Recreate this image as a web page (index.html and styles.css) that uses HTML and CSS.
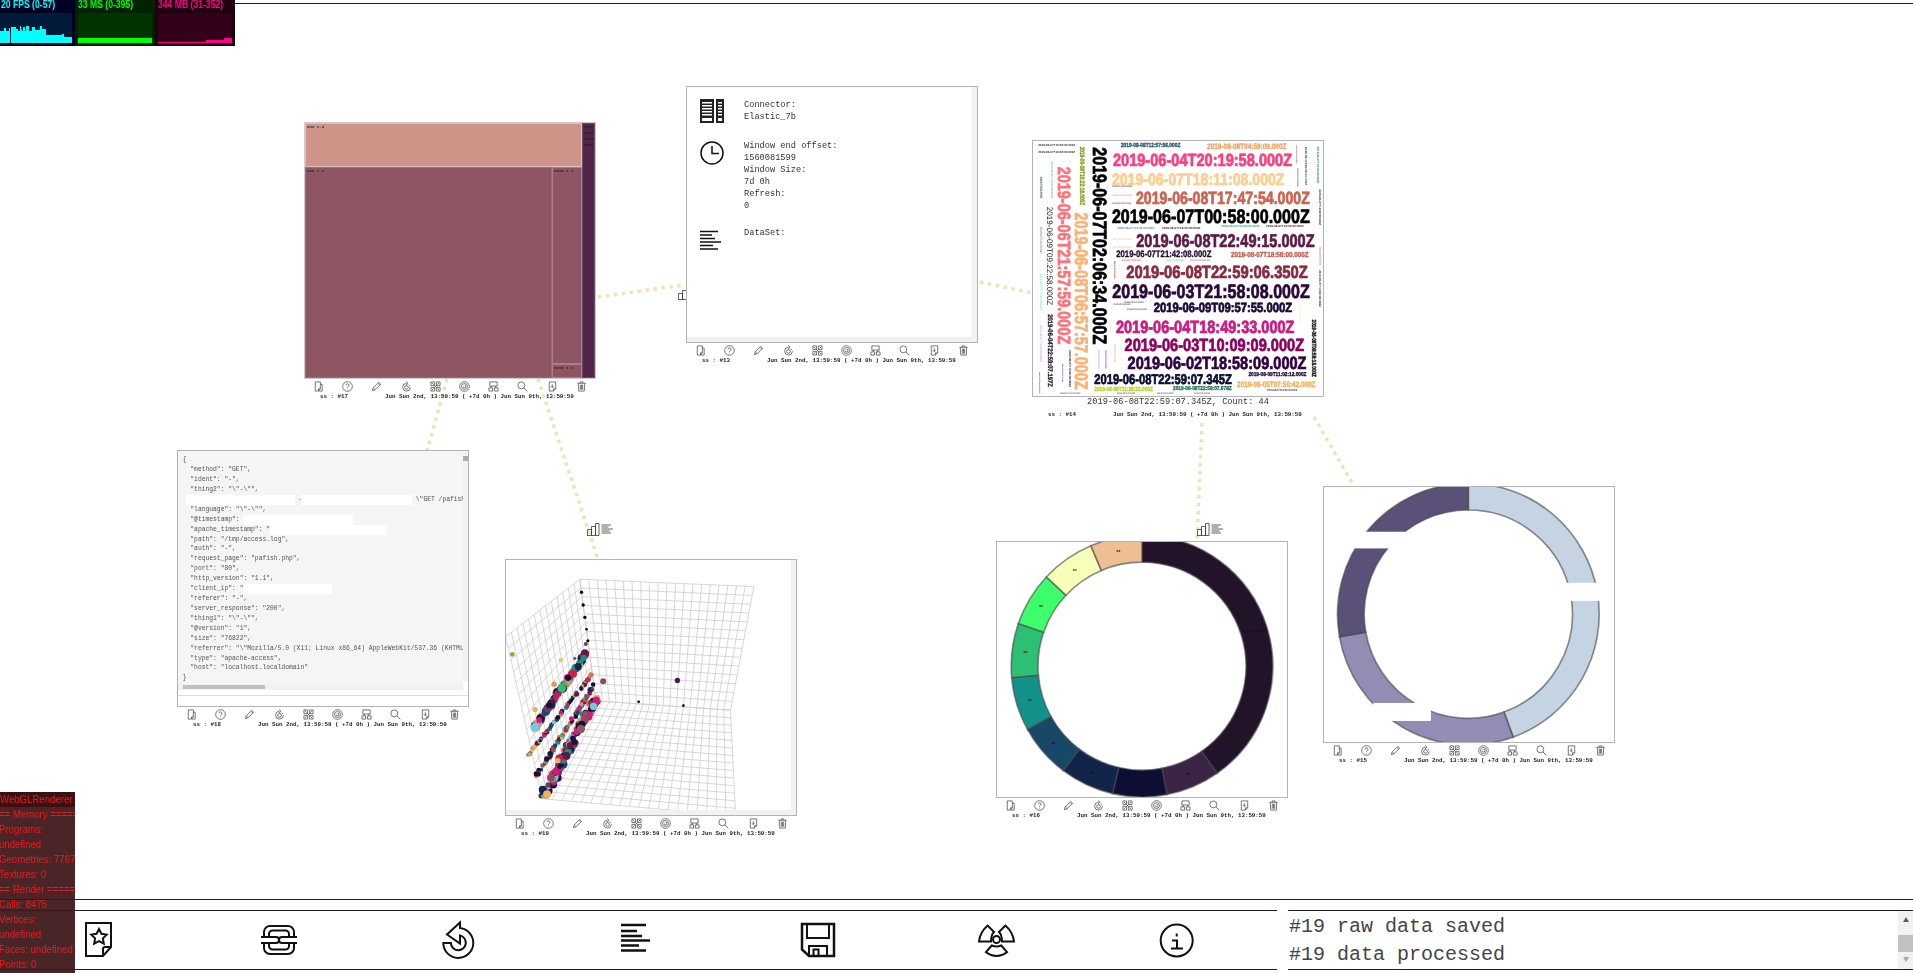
FILE: index.html
```html
<!DOCTYPE html>
<html lang="en">
<head>
<meta charset="utf-8">
<title>Dashboard</title>
<link rel="stylesheet" href="styles.css">
<script src="app.js" defer></script>
</head>
<body>
<svg class="defs" width="0" height="0" aria-hidden="true">
  <symbol id="t-copy" viewBox="0 0 24 24"><path d="M5 2h11v15l-4 5H5z M12 22v-5h4 M16 7h4v15h-7"/></symbol>
  <symbol id="t-help" viewBox="0 0 24 24"><circle cx="12" cy="12" r="10.5"/><path d="M8.8 9.5a3.2 3.2 0 1 1 4.8 2.7c-1 .6-1.6 1.2-1.6 2.5 M12 17v1.5"/></symbol>
  <symbol id="t-edit" viewBox="0 0 24 24"><path d="M3 21l1.5-5.500L17 3l4 4L8.500 19.500z M15 5l4 4 M5 15l4 4"/></symbol>
  <symbol id="t-spin" viewBox="0 0 24 24"><path d="M12 5a8.500 8.500 0 1 0 8.500 8.500 M11 1l4.500 4-4.500 3.500 M17 8l3 3"/><circle cx="12" cy="14" r="4"/></symbol>
  <symbol id="t-grid" viewBox="0 0 24 24"><path d="M2 2h8v8H2z M14 2h8v8h-8z M2 14h8v8H2z M14 14h8v8h-8z M10 10l4 4 M14 10l-4 4 M4 4l4 4 M20 4l-4 4 M4 20l4-4 M20 20l-4-4"/></symbol>
  <symbol id="t-disc" viewBox="0 0 24 24"><circle cx="12" cy="12" r="10.500"/><circle cx="12" cy="12" r="6.500"/><path d="M12 9a3 3 0 1 1-3 3"/></symbol>
  <symbol id="t-tree" viewBox="0 0 24 24"><path d="M4 2h16v9H4z M2 15h8v7H2z M14 15h8v7h-8z M7 11v4 M17 11v4"/></symbol>
  <symbol id="t-find" viewBox="0 0 24 24"><circle cx="9.500" cy="9.500" r="7.500"/><path d="M15 15l7.500 7.500"/></symbol>
  <symbol id="t-save" viewBox="0 0 24 24"><path d="M5 2h14v15l-5 5H5z M14 22v-5h5 M11.500 7v7 M8.500 11.500l3 3 3-3"/></symbol>
  <symbol id="t-drop" viewBox="0 0 24 24"><path d="M3 5h18 M9 5V2h6v3 M5 5l1 17h12l1-17 M9.500 8v11 M12 8v11 M14.500 8v11"/></symbol>
  <symbol id="t-stack" viewBox="0 0 26 13"><path class="thin" d="M.5 12.500V6.500h4v6 M4.500 12.500V3.500h4v9 M8.500 12.500V.5h3.500v12 M0 12.500h12"/><path class="thin" d="M14.500 2H24 M14.500 4h7 M14.500 6H26 M14.500 8h8 M14.500 10H24"/></symbol>
</svg>

<div class="page">
  <main class="canvas">
    <svg class="links" viewBox="0 4 1913 895" aria-hidden="true">
      <path d="M598 297L683 285"/>
      <path d="M980 282L1032 293"/>
      <path d="M447 379L427 451"/>
      <path d="M538 379L598 559"/>
      <path d="M1202 423L1197 541"/>
      <path d="M1314 417L1354 486"/>
    </svg>
    <svg class="stack s1"><use href="#t-stack"/></svg>
    <svg class="stack s2"><use href="#t-stack"/></svg>
    <svg class="stack s3"><use href="#t-stack"/></svg>

    <section class="win w17">
      <div class="body treemap">
        <div class="tm-left">
          <div class="tm-cell tm-peach">xxx 1.3</div>
          <div class="tm-row">
            <div class="tm-cell tm-mauve">xxx 1.1</div>
            <div class="tm-side">
              <div class="tm-cell tm-mauve">xxxx 1.1</div>
              <div class="tm-cell tm-mauve">xxxx 1.1</div>
            </div>
          </div>
        </div>
        <div class="tm-cell tm-plum">xxxxxx<br>xxxx<br>xxxxxx<br>xxxx</div>
      </div>
      <div class="tools"><svg><use href="#t-copy"/></svg><svg><use href="#t-help"/></svg><svg><use href="#t-edit"/></svg><svg><use href="#t-spin"/></svg><svg><use href="#t-grid"/></svg><svg><use href="#t-disc"/></svg><svg><use href="#t-tree"/></svg><svg><use href="#t-find"/></svg><svg><use href="#t-save"/></svg><svg><use href="#t-drop"/></svg></div>
      <div class="meta"><span class="id">ss : #17</span><span>Jun Sun 2nd, 13:59:59 ( +7d 0h ) Jun Sun 9th, 13:59:59</span></div>
    </section>

    <section class="win w13">
      <div class="body info">
        <div class="info-row r1">
          <svg class="info-icon" viewBox="0 0 24 24"><path class="rack" d="M0 0h14v24H0z M16 0h8v24h-8z"/><path class="slot" d="M2 3h10v1.500H2z M2 6h10v1.500H2z M2 9h10v1.500H2z M2 12h10v1.500H2z M2 15h10v1.500H2z M18 3h4v1.500h-4z M18 6h4v1.500h-4z M18 9h4v1.500h-4z M18 12h4v1.500h-4z M18 15h4v1.500h-4z M2 19h10v3H2z M18 19h4v3h-4z"/></svg>
          <p>Connector:<br>Elastic_7b</p>
        </div>
        <div class="info-row r2">
          <svg class="info-icon line" viewBox="0 0 24 24"><circle cx="12" cy="12" r="11"/><path d="M12 5v7.500h7"/></svg>
          <p>Window end offset:<br>1560081599<br>Window Size:<br>7d 0h<br>Refresh:<br>0</p>
        </div>
        <div class="info-row r3">
          <svg class="info-icon line" viewBox="0 0 24 24"><path d="M0 1.500h18 M0 5h12 M0 8.500h15 M0 12h21 M0 15.500h13 M0 19h18"/></svg>
          <p>DataSet:</p>
        </div>
        <div class="sb-v"></div>
        <div class="sb-h"></div>
      </div>
      <div class="tools"><svg><use href="#t-copy"/></svg><svg><use href="#t-help"/></svg><svg><use href="#t-edit"/></svg><svg><use href="#t-spin"/></svg><svg><use href="#t-grid"/></svg><svg><use href="#t-disc"/></svg><svg><use href="#t-tree"/></svg><svg><use href="#t-find"/></svg><svg><use href="#t-save"/></svg><svg><use href="#t-drop"/></svg></div>
      <div class="meta"><span class="id">ss : #13</span><span>Jun Sun 2nd, 13:59:59 ( +7d 0h ) Jun Sun 9th, 13:59:59</span></div>
    </section>

    <section class="win w14">
      <div class="body">
        <svg class="chart cloud" viewBox="36 30 874 770">
          <text x="278" y="108" font-size="53" textLength="537" fill="#ff3d7d">2019-06-04T20:19:58.000Z</text>
          <text x="275" y="164" font-size="50" textLength="517" fill="#ffcd8c">2019-06-07T18:11:08.000Z</text>
          <text x="347" y="222" font-size="53" textLength="521" fill="#cb6450">2019-06-08T17:47:54.000Z</text>
          <text x="275" y="280" font-size="58" textLength="593" fill="#000">2019-06-07T00:58:00.000Z</text>
          <text x="348" y="352" font-size="55" textLength="534" fill="#5c1a48">2019-06-08T22:49:15.000Z</text>
          <text x="288" y="380" font-size="28" textLength="285" fill="#220a30">2019-06-07T21:42:08.000Z</text>
          <text x="632" y="380" font-size="22" textLength="232" fill="#c05a50">2019-08-07T18:58:00.000Z</text>
          <text x="318" y="443" font-size="53" textLength="544" fill="#8a2a40">2019-06-08T22:59:06.350Z</text>
          <text x="276" y="502" font-size="58" textLength="592" fill="#2a0838">2019-06-03T21:58:08.000Z</text>
          <text x="400" y="546" font-size="40" textLength="415" fill="#1a0838">2019-06-09T09:57:55.000Z</text>
          <text x="287" y="608" font-size="53" textLength="535" fill="#d01880">2019-06-04T18:49:33.000Z</text>
          <text x="313" y="662" font-size="53" textLength="538" fill="#900060">2019-06-03T10:09:09.000Z</text>
          <text x="322" y="715" font-size="53" textLength="536" fill="#300040">2019-06-02T18:58:09.000Z</text>
          <text x="222" y="760" font-size="42" textLength="412" fill="#0a0a30">2019-06-08T22:59:07.345Z</text>
          <text x="650" y="771" font-size="24" textLength="235" fill="#ffa850">2019-06-05T07:50:42.000Z</text>
          <text x="222" y="782" font-size="18" textLength="176" fill="#b8d020">2019-06-09T11:28:22.000Z</text>
          <text x="458" y="778" font-size="17" textLength="176" fill="#207058">2019-06-08T22:59:07.678Z</text>
          <text x="684" y="736" font-size="17" textLength="174" fill="#200a30">2019-08-09T11:02:12.000Z</text>
          <text x="302" y="50" font-size="18" textLength="178" fill="#205070">2019-08-08T12:57:56.000Z</text>
          <text x="560" y="58" font-size="24" textLength="238" fill="#f0a060">2019-08-08T04:59:09.000Z</text>

          <text x="54" y="47" font-size="9" textLength="111" fill="#222">2019-06-07T13:02:00.000Z</text>
          <text x="54" y="70" font-size="9" textLength="111" fill="#222">2019-06-07T13:02:00.000Z</text>
          <text x="276" y="172" font-size="7" textLength="59" fill="#553355">2019-06-07T13:02:00.000Z</text>
          <text x="276" y="198" font-size="7" textLength="59" fill="#e8a080">2019-06-07T13:02:00.000Z</text>
          <text x="276" y="222" font-size="7" textLength="57" fill="#7a3070">2019-06-07T13:02:00.000Z</text>
          <text x="291" y="298" font-size="9" textLength="111" fill="#6080a0">2019-06-07T13:02:00.000Z</text>
          <text x="425" y="298" font-size="9" textLength="115" fill="#222">2019-06-07T13:02:00.000Z</text>
          <text x="603" y="291" font-size="9" textLength="115" fill="#20a080">2019-06-07T13:02:00.000Z</text>
          <text x="737" y="291" font-size="9" textLength="113" fill="#222">2019-06-07T13:02:00.000Z</text>
          <text x="278" y="331" font-size="7" textLength="56" fill="#f0c090">2019-06-07T13:02:00.000Z</text>
          <text x="278" y="354" font-size="7" textLength="56" fill="#f0c090">2019-06-07T13:02:00.000Z</text>
          <text x="305" y="392" font-size="7" textLength="57" fill="#e05050">2019-06-07T13:02:00.000Z</text>
          <text x="436" y="392" font-size="7" textLength="54" fill="#70e070">2019-06-07T13:02:00.000Z</text>
          <text x="510" y="392" font-size="7" textLength="60" fill="#907040">2019-06-07T13:02:00.000Z</text>
          <text x="280" y="525" font-size="7" textLength="50" fill="#444">2019-06-07T13:02:00.000Z</text>
          <text x="312" y="518" font-size="7" textLength="58" fill="#444">2019-06-07T13:02:00.000Z</text>
          <text x="320" y="540" font-size="7" textLength="60" fill="#444">2019-06-07T13:02:00.000Z</text>
          <text x="120" y="790" font-size="7" textLength="60" fill="#555">2019-06-07T13:02:00.000Z</text>
          <text x="290" y="792" font-size="7" textLength="55" fill="#704060">2019-06-07T13:02:00.000Z</text>
          <text x="410" y="792" font-size="7" textLength="50" fill="#306060">2019-06-07T13:02:00.000Z</text>
          <text x="520" y="792" font-size="7" textLength="50" fill="#a04040">2019-06-07T13:02:00.000Z</text>
          <text x="740" y="782" font-size="9" textLength="90" fill="#203040">2019-06-07T13:02:00.000Z</text>

          <text transform="translate(217 52) rotate(90)" font-size="58" textLength="590" fill="#000">2019-06-07T02:06:34.000Z</text>
          <text transform="translate(163 247) rotate(90)" font-size="55" textLength="531" fill="#ffb070">2019-06-08T06:57:57.000Z</text>
          <text transform="translate(113 110) rotate(90)" font-size="53" textLength="532" fill="#ff7078">2019-06-06T21:57:59.000Z</text>
          <text transform="translate(80 230) rotate(90)" font-size="24" textLength="295" fill="#1a1a1a" class="thin">2019-06-09T09:22:58.000Z</text>
          <text transform="translate(178 50) rotate(90)" font-size="20" textLength="175" fill="#8a9a20">2019-06-09T10:22:18.000Z</text>
          <text transform="translate(83 552) rotate(90)" font-size="20" textLength="218" fill="#2a1a30">2019-06-04T22:59:07.197Z</text>
          <text transform="translate(93 95) rotate(90)" font-size="9" textLength="110" fill="#80c0e0">2019-06-07T13:02:00.000Z</text>
          <text transform="translate(60 140) rotate(90)" font-size="10" textLength="65" fill="#333">2019-06-07T13:02:00.000Z</text>
          <text transform="translate(60 290) rotate(90)" font-size="10" textLength="80" fill="#a090b0">2019-06-07T13:02:00.000Z</text>
          <text transform="translate(60 430) rotate(90)" font-size="10" textLength="110" fill="#90f0d0">2019-06-07T13:02:00.000Z</text>
          <text transform="translate(60 585) rotate(90)" font-size="10" textLength="110" fill="#c0c8d0">2019-06-07T13:02:00.000Z</text>
          <text transform="translate(57 725) rotate(90)" font-size="5" textLength="65" fill="#702040">2019-06-07T13:02:00.000Z</text>
          <text transform="translate(145 660) rotate(90)" font-size="9" textLength="110" fill="#221030">2019-06-07T13:02:00.000Z</text>
          <text transform="translate(124 700) rotate(90)" font-size="5" textLength="55" fill="#304090">2019-06-07T13:02:00.000Z</text>
          <text transform="translate(232 660) rotate(90)" font-size="7" textLength="55" fill="#b8a0c0">2019-06-07T13:02:00.000Z</text>
          <text transform="translate(255 660) rotate(90)" font-size="7" textLength="55" fill="#c03090">2019-06-07T13:02:00.000Z</text>
          <text transform="translate(282 640) rotate(90)" font-size="7" textLength="55" fill="#f0b080">2019-06-07T13:02:00.000Z</text>
          <text transform="translate(282 392) rotate(90)" font-size="6" textLength="53" fill="#803040">2019-06-07T13:02:00.000Z</text>
          <text transform="translate(828 45) rotate(90)" font-size="5" textLength="55" fill="#b04030">2019-06-07T13:02:00.000Z</text>
          <text transform="translate(830 115) rotate(90)" font-size="6" textLength="55" fill="#c02040">2019-06-07T13:02:00.000Z</text>
          <text transform="translate(855 50) rotate(90)" font-size="9" textLength="115" fill="#203040">2019-06-07T13:02:00.000Z</text>
          <text transform="translate(890 50) rotate(90)" font-size="9" textLength="110" fill="#208090">2019-06-07T13:02:00.000Z</text>
          <text transform="translate(895 178) rotate(90)" font-size="9" textLength="107" fill="#203060">2019-06-07T13:02:00.000Z</text>
          <text transform="translate(895 350) rotate(90)" font-size="9" textLength="55" fill="#f08070">2019-06-07T13:02:00.000Z</text>
          <text transform="translate(895 420) rotate(90)" font-size="9" textLength="110" fill="#203060">2019-06-07T13:02:00.000Z</text>
          <text transform="translate(835 525) rotate(90)" font-size="9" textLength="50" fill="#f0f0a0">2019-06-07T13:02:00.000Z</text>
          <text transform="translate(873 568) rotate(90)" font-size="18" textLength="172" fill="#111">2019-06-08T08:58:18.000Z</text>
        </svg>
      </div>
      <div class="caption">2019-06-08T22:59:07.345Z, Count: 44</div>
      <div class="meta"><span class="id">ss : #14</span><span>Jun Sun 2nd, 13:59:59 ( +7d 0h ) Jun Sun 9th, 13:59:59</span></div>
    </section>

    <section class="win w18">
      <div class="body json">
<pre class="json-text">{
  "method": "GET",
  "ident": "-",
  "thing2": "\"-\"",
<span class="mask m1"></span> - <span class="mask m2"></span> \"GET /pafish.php HTTP/1.1\"",
  "language": "\"-\"",
  "@timestamp": <span class="mask m3"></span>
  "apache_timestamp": "<span class="mask m4"></span>
  "path": "/tmp/access.log",
  "auth": "-",
  "request_page": "pafish.php",
  "port": "80",
  "http_version": "1.1",
  "client_ip": "<span class="mask m5"></span>
  "referer": "-",
  "server_response": "200",
  "thing1": "\"-\"",
  "@version": "1",
  "size": "76822",
  "referrer": "\"Mozilla/5.0 (X11; Linux x86_64) AppleWebKit/537.36 (KHTML, like Gecko)",
  "type": "apache-access",
  "host": "localhost.localdomain"
}</pre>
        <div class="json-hbar"></div>
        <div class="json-foot"></div>
        <div class="json-vbar"></div>
      </div>
      <div class="tools"><svg><use href="#t-copy"/></svg><svg><use href="#t-help"/></svg><svg><use href="#t-edit"/></svg><svg><use href="#t-spin"/></svg><svg><use href="#t-grid"/></svg><svg><use href="#t-disc"/></svg><svg><use href="#t-tree"/></svg><svg><use href="#t-find"/></svg><svg><use href="#t-save"/></svg><svg><use href="#t-drop"/></svg></div>
      <div class="meta"><span class="id">ss : #18</span><span>Jun Sun 2nd, 13:59:59 ( +7d 0h ) Jun Sun 9th, 13:59:59</span></div>
    </section>

    <section class="win w19">
      <div class="body">
        <svg class="chart" id="scatter" viewBox="13 148 874 768"></svg>
        <div class="sb-v"></div>
        <div class="sb-h"></div>
      </div>
      <div class="tools"><svg><use href="#t-copy"/></svg><svg><use href="#t-help"/></svg><svg><use href="#t-edit"/></svg><svg><use href="#t-spin"/></svg><svg><use href="#t-grid"/></svg><svg><use href="#t-disc"/></svg><svg><use href="#t-tree"/></svg><svg><use href="#t-find"/></svg><svg><use href="#t-save"/></svg><svg><use href="#t-drop"/></svg></div>
      <div class="meta"><span class="id">ss : #19</span><span>Jun Sun 2nd, 13:59:59 ( +7d 0h ) Jun Sun 9th, 13:59:59</span></div>
    </section>

    <section class="win w16">
      <div class="body">
        <svg class="chart" id="ring16" viewBox="17 64 873 766"></svg>
      </div>
      <div class="tools"><svg><use href="#t-copy"/></svg><svg><use href="#t-help"/></svg><svg><use href="#t-edit"/></svg><svg><use href="#t-spin"/></svg><svg><use href="#t-grid"/></svg><svg><use href="#t-disc"/></svg><svg><use href="#t-tree"/></svg><svg><use href="#t-find"/></svg><svg><use href="#t-save"/></svg><svg><use href="#t-drop"/></svg></div>
      <div class="meta"><span class="id">ss : #16</span><span>Jun Sun 2nd, 13:59:59 ( +7d 0h ) Jun Sun 9th, 13:59:59</span></div>
    </section>

    <section class="win w15">
      <div class="body">
        <svg class="chart" id="ring15" viewBox="10 18 874 770"></svg>
      </div>
      <div class="tools"><svg><use href="#t-copy"/></svg><svg><use href="#t-help"/></svg><svg><use href="#t-edit"/></svg><svg><use href="#t-spin"/></svg><svg><use href="#t-grid"/></svg><svg><use href="#t-disc"/></svg><svg><use href="#t-tree"/></svg><svg><use href="#t-find"/></svg><svg><use href="#t-save"/></svg><svg><use href="#t-drop"/></svg></div>
      <div class="meta"><span class="id">ss : #15</span><span>Jun Sun 2nd, 13:59:59 ( +7d 0h ) Jun Sun 9th, 13:59:59</span></div>
    </section>
  </main>

  <footer class="footer">
    <div class="bar">
      <nav class="actions">
        <button class="action"><svg viewBox="0 0 36 36"><path d="M5 1H30V25L22 34H5z M30 25H24Q22 25 22 27V34"/><path d="M18 7l2.400 4.800 5.300.8-3.800 3.700.9 5.300-4.800-2.500-4.800 2.500.9-5.300-3.800-3.700 5.300-.8z"/></svg></button>
        <button class="action"><svg viewBox="0 0 36 36"><path d="M3 15V10a6 6 0 0 1 6-6H27a6 6 0 0 1 6 6V15 M8 15V12a3.500 3.500 0 0 1 3.500-3.500H24.500a3.500 3.500 0 0 1 3.500 3.500V15 M3 21v5a6 6 0 0 0 6 6H27a6 6 0 0 0 6-6V21 M8 21v3a3.500 3.500 0 0 0 3.500 3.500H24.500a3.500 3.500 0 0 0 3.500-3.500V21"/><path d="M0 15H15 M21 15H36 M0 21H15 M21 21H36 M15 15a3 3 0 0 1 0 6 M21 15a3 3 0 0 0 0 6"/></svg></button>
        <button class="action"><svg viewBox="0 0 36 36"><path d="M19 .5L6 12.500L19 21.500V13.400A7.500 7.500 0 1 1 9.800 21H2.300A15 15 0 1 0 19 6Z"/></svg></button>
        <button class="action"><svg viewBox="0 0 36 36" class="lines-icon"><path d="M0 3H25 M0 9H16 M0 14H21 M0 18.500H29 M0 23.500H18 M0 28.500H25"/></svg></button>
        <button class="action"><svg viewBox="0 0 36 36"><path d="M1 2H33V34H8L1 27.500Z" class="heavy"/><path d="M6 2V16H28V2 M8 34V24H26V34 M12.500 34V27.500H17.500V34"/></svg></button>
        <button class="action"><svg viewBox="0 0 36 36"><circle cx="15.500" cy="17.500" r="3.500"/><path d="M10.700 23.500Q15.500 25.500 20.300 23.500L26 30.200Q15.500 38 5 30.200Z"/><path d="M33 19.500Q32 10 24.300 3.500L18 10Q21 13 21 19.500Z"/><path d="M-2 19.500Q-1 10 6.700 3.500L13 10Q10 13 10 19.500Z"/></svg></button>
        <button class="action"><svg viewBox="0 0 36 36"><circle cx="15.700" cy="18.500" r="16"/><path d="M15.700 11.500v3 M11 18.500h5v8 M10 26.500h12"/></svg></button>
      </nav>
      <div class="log">
        <div class="log-text">
          <div>#19 raw data saved</div>
          <div>#19 data processed</div>
        </div>
        <div class="log-scroll"><i class="up"></i><b></b><i class="down"></i></div>
      </div>
    </div>
  </footer>
</div>

<aside class="stats">
  <div class="stat fps">
    <span>20 FPS (0-57)</span>
    <svg viewBox="0 0 72 30" preserveAspectRatio="none"><path d="M0 30V18H4V15H6V18H9V15H10V30H11V14H16V16H18V18H20V13H21V16H22V18H23V14H25V18H26V13H29V18H32V14H35V17H40V13H42V16H46V22H62V21H64V24H72V30Z"/></svg>
  </div>
  <div class="stat ms">
    <span>33 MS (0-395)</span>
    <svg viewBox="0 0 74 30" preserveAspectRatio="none"><path d="M0 30V25H74V30Z"/></svg>
  </div>
  <div class="stat mb">
    <span>344 MB (31-352)</span>
    <svg viewBox="0 0 74 30" preserveAspectRatio="none"><path d="M0 30V29H48V27H66V25H74V30Z"/></svg>
  </div>
</aside>

<aside class="gl">
  <div class="gl-head">WebGLRenderer</div>
  <div>== Memory =====</div>
  <div>Programs:</div>
  <div>undefined</div>
  <div>Geometries: 7767</div>
  <div>Textures: 0</div>
  <div>== Render =====</div>
  <div>Calls: 8475</div>
  <div>Vertices:</div>
  <div>undefined</div>
  <div>Faces: undefined</div>
  <div>Points: 0</div>
</aside>
```

FILE: styles.css
```css
* { box-sizing: border-box; }
html, body { margin: 0; height: 973px; overflow: hidden; background: #fff; }
body { font-family: "Liberation Mono", monospace; color: #222; }
.defs { position: absolute; }
symbol path, symbol circle { fill: none; stroke: #3a3a3a; stroke-width: 1.500; }
symbol path.thin { stroke-width: .8; }

.page { height: 973px; padding-top: 3px; display: flex; flex-direction: column; }
.canvas { flex: 1; position: relative; border-top: 1px solid #14202e; }
.links { position: absolute; left: 0; top: 0; width: 1913px; height: 895px; }
.links path { fill: none; stroke: #efe3b4; stroke-width: 3.500; stroke-dasharray: 3.500 4.500; }
.stack { position: absolute; width: 26px; height: 13px; filter: blur(.25px); }
.stack.s1 { left: 587px; top: 519px; }
.stack.s2 { left: 1197px; top: 519px; }
.stack.s3 { left: 678px; top: 283px; }

.win { position: absolute; width: 292px; filter: blur(.3px); }
.w17 { left: 304px; top: 118px; }
.w13 { left: 686px; top: 82px; }
.w14 { left: 1032px; top: 136px; }
.w18 { left: 177px; top: 446px; }
.w19 { left: 505px; top: 555px; }
.w16 { left: 996px; top: 537px; }
.w15 { left: 1323px; top: 482px; }

.body { position: relative; height: 257px; background: #fff; border: 1px solid #b3b3b3; overflow: hidden; }
.chart { display: block; position: absolute; left: -1px; top: -1px; width: 292px; height: 257px; }
.tools { height: 14px; display: grid; grid-template-columns: repeat(10, 1fr); justify-items: center; align-items: center; }
.tools svg { width: 11px; height: 11px; }
.meta { height: 8px; display: flex; padding-left: 16px; font-size: 5.830px; line-height: 8px; font-weight: bold; color: #222; white-space: pre; }
.meta .id { width: 65px; }
.caption { height: 14px; text-align: center; font-size: 8.670px; line-height: 11px; color: #333; }

.sb-v { position: absolute; top: 0; right: 0; bottom: 0; width: 5px; background: #f1f1f1; }
.sb-h { position: absolute; left: 0; right: 0; bottom: 0; height: 5px; background: #f1f1f1; }

/* treemap */
.treemap { display: flex; border-color: #d4c8cc; }
.tm-left { flex: 1; display: flex; flex-direction: column; }
.tm-row { flex: 1; display: flex; }
.tm-side { width: 30px; display: flex; flex-direction: column; }
.tm-side .tm-cell:first-child { height: 197px; }
.tm-side .tm-cell:last-child { flex: 1; }
.tm-cell { font-size: 4.100px; line-height: 6px; font-weight: bold; color: #2a1a20; padding: 0 1px; border: 1px solid #ab7f8a; overflow: hidden; white-space: nowrap; }
.tm-peach { height: 44px; background: #cd9487; border-color: #dfc0b8; }
.tm-mauve { background: #8e5664; }
.tm-row > .tm-mauve { flex: 1; border-color: #9c6a76; }
.tm-plum { width: 13px; background: #522647; border-color: #6d4a66; }

/* info panel */
.info { color: #333; font-size: 8.670px; line-height: 12px; padding: 12px 0 0 13px; }
.info p { margin: 0; white-space: pre; }
.info-row { display: flex; }
.info-row.r2 { margin-top: 17px; }
.info-row.r3 { margin-top: 15px; }
.info-icon { width: 24px; height: 24px; margin-right: 20px; flex: none; }
.rack { fill: #222; }
.slot { fill: #fff; }
.info-icon.line path, .info-icon.line circle { fill: none; stroke: #111; stroke-width: 1.500; }
.r2 .info-icon { margin-top: 1px; }
.r3 .info-icon { margin-top: 3px; }

/* json panel */
.json { background: #fff; }
.json-text { margin: 0; height: 233px; width: 285px; padding: 4px 0 0 4.700px; overflow: hidden; background: #f5f5f5; color: #555; font: 6.330px/9.900px "Liberation Mono", monospace; }
.mask { display: inline-block; height: 10px; background: #fff; vertical-align: top; }
.m1 { width: 109px; margin-left: 3.300px; }
.m2 { width: 111px; margin-left: -5.400px; }
.m3 { width: 110px; }
.m4 { width: 117px; }
.m5 { width: 89px; }
.json-hbar { width: 285px; height: 6px; background: #f1f1f1; position: relative; }
.json-hbar::after { content: ""; position: absolute; left: 5px; top: 1px; width: 82px; height: 4px; background: #c1c1c1; }
.json-foot { height: 6px; border-bottom: 1px solid #ddd; }
.json-vbar { position: absolute; top: 0; right: 0; width: 5px; height: 230px; background: #f1f1f1; }
.json-vbar::after { content: ""; position: absolute; left: 0; top: 5px; width: 5px; height: 5px; background: #aaa; }

/* word cloud */
.cloud text { font-family: "Liberation Sans", sans-serif; font-weight: bold; text-rendering: geometricPrecision; }
.cloud .thin { font-weight: normal; }

/* rings and scatter */
.sector { stroke: rgba(70, 70, 70, .6); stroke-width: 5; }
.sector-label { font: bold 10px "Liberation Mono", monospace; fill: #111; text-anchor: middle; }
.grid-line { fill: none; stroke: #cfcfcf; stroke-width: 2.500; }

/* footer */
.footer { height: 74px; border-top: 1px solid #14202e; padding-top: 10px; }
.bar { display: flex; height: 60px; justify-content: space-between; }
.actions { width: 1277px; display: grid; grid-template-columns: repeat(7, 180px); padding-left: 9px; align-items: center; border-top: 1px solid #14202e; border-bottom: 1px solid #14202e; }
.action { border: 0; padding: 0; background: none; height: 36px; display: flex; justify-content: center; }
.action svg { width: 36px; height: 36px; overflow: visible; filter: blur(.3px); }
.action svg path, .action svg circle { fill: none; stroke: #111; stroke-width: 2; }
.action svg path.heavy { stroke-width: 2.500; }
.lines-icon path { stroke-width: 2.500 !important; }
.log { width: 625px; display: flex; border-top: 1px solid #14202e; border-bottom: 1px solid #14202e; }
.log-text { flex: 1; padding: 2px 0 0 1px; font: 20px/28px "Liberation Mono", monospace; color: #444; overflow: hidden; }
.log-scroll { width: 15px; background: #f1f1f1; display: flex; flex-direction: column; align-items: center; padding-top: 6px; }
.log-scroll i { width: 0; height: 0; border-left: 3.500px solid transparent; border-right: 3.500px solid transparent; }
.log-scroll .up { border-bottom: 5px solid #606060; }
.log-scroll .down { border-top: 5px solid #a8a8a8; margin-top: 5px; }
.log-scroll b { width: 15px; height: 17px; margin-top: 13px; background: #c1c1c1; }

/* stats overlay */
.stats { position: absolute; left: 0; top: 0; display: flex; height: 46px; overflow: hidden; }
.stat { position: relative; width: 80px; height: 46px; overflow: hidden; }
.stat span { position: absolute; left: 3px; top: -2px; font: bold 10.500px/12px "Liberation Sans", sans-serif; white-space: nowrap; transform: scaleX(.82); transform-origin: left top; }
.stat svg { position: absolute; left: 3px; top: 13px; width: 74px; height: 30px; display: block; }
.fps { width: 75px; background: #000022; color: #00ffff; }
.fps span { left: 1px; }
.fps svg { left: 0; width: 72px; background: #001a3a; }
.fps path { fill: #00ffff; }
.ms { background: #002200; color: #00ff00; }
.ms svg { background: #003300; }
.ms path { fill: #00ff00; }
.mb { background: #200010; color: #ff0088; }
.mb svg { background: #33001c; }
.mb path { fill: #ff0088; }

.gl { position: absolute; left: 0; top: 792px; width: 75px; height: 181px; background: rgba(60, 20, 24, .93); color: #f01818; font: 10.800px/15px "Liberation Sans", sans-serif; white-space: nowrap; overflow: hidden; }
.gl div { margin-left: -1px; height: 15px; transform: scaleX(.89); transform-origin: left center; }
.gl .gl-head { margin-left: 0; width: 85px; background: #3a1012; }
```

FILE: app.js
```js
const NS = "http://www.w3.org/2000/svg";

function el(parent, name, attrs, text) {
  const node = document.createElementNS(NS, name);
  for (const key in attrs) node.setAttribute(key, attrs[key]);
  if (text) node.textContent = text;
  parent.appendChild(node);
  return node;
}

document.querySelectorAll(".cloud text").forEach((word) => {
  word.setAttribute("lengthAdjust", "spacingAndGlyphs");
  const size = Number(word.getAttribute("font-size"));
  if (size >= 17 && !word.classList.contains("thin")) {
    word.setAttribute("stroke", word.getAttribute("fill"));
    word.setAttribute("stroke-width", size >= 35 ? 2.2 : 1);
  }
});

function polar(cx, cy, r, deg) {
  const a = (deg - 90) * Math.PI / 180;
  return [cx + r * Math.cos(a), cy + r * Math.sin(a)];
}

function ring(id, cx, cy, ro, ri, sectors) {
  const svg = document.getElementById(id);
  for (const s of sectors) {
    const large = s.to - s.from > 180 ? 1 : 0;
    const [a, b] = polar(cx, cy, ro, s.from);
    const [c, d] = polar(cx, cy, ro, s.to);
    const [e, f] = polar(cx, cy, ri, s.to);
    const [g, h] = polar(cx, cy, ri, s.from);
    el(svg, "path", {
      class: "sector",
      fill: s.color,
      d: `M${a} ${b}A${ro} ${ro} 0 ${large} 1 ${c} ${d}L${e} ${f}A${ri} ${ri} 0 ${large} 0 ${g} ${h}Z`
    });
    if (s.label) {
      const [x, y] = s.at || polar(cx, cy, (ro + ri) / 2, (s.from + s.to) / 2);
      el(svg, "text", { class: "sector-label", x, y: y + 3 }, s.label);
    }
  }
  return svg;
}

ring("ring16", 453.500, 437, 391, 311, [
  { from: 0, to: 145, color: "#231329", label: "0...x2.xx2.x2", at: [790, 333] },
  { from: 145, to: 169, color: "#3a2545", label: "0x" },
  { from: 169, to: 193, color: "#0d0e34", label: "0x" },
  { from: 193, to: 217, color: "#102549", label: "0x" },
  { from: 217, to: 241, color: "#174868", label: "0x" },
  { from: 241, to: 265, color: "#11918a", label: "0x" },
  { from: 265, to: 289, color: "#2dbf73", label: "0x" },
  { from: 289, to: 313, color: "#3dff6b", label: "0x" },
  { from: 313, to: 337, color: "#f8ffb8", label: "0x" },
  { from: 337, to: 360, color: "#eebf92", label: "0x" }
]);

const ring15 = ring("ring15", 445, 402, 392, 312, [
  { from: 0, to: 160, color: "#c4d4e2" },
  { from: 160, to: 260, color: "#918db5" },
  { from: 260, to: 360, color: "#5a5078" }
]);
for (const [x, y, width, height] of [[105, 155, 150, 50], [740, 308, 100, 54], [160, 668, 173, 54]]) {
  el(ring15, "rect", { x, y, width, height, fill: "#fff" });
}

const scatter = document.getElementById("scatter");

function plane(p00, p10, p01, p11, nu, nv) {
  const lerp = (a, b, t) => [a[0] + (b[0] - a[0]) * t, a[1] + (b[1] - a[1]) * t];
  for (let i = 0; i <= nu; i++) {
    const t = i / nu;
    const a = lerp(p00, p10, t);
    const b = lerp(p01, p11, t);
    el(scatter, "line", { class: "grid-line", x1: a[0], y1: a[1], x2: b[0], y2: b[1] });
  }
  for (let j = 0; j <= nv; j++) {
    const t = j / nv;
    const a = lerp(p00, p01, t);
    const b = lerp(p10, p11, t);
    el(scatter, "line", { class: "grid-line", x1: a[0], y1: a[1], x2: b[0], y2: b[1] });
  }
}

plane([237, 208], [758, 230], [285, 572], [688, 600], 20, 14);
plane([15, 380], [237, 208], [125, 865], [285, 572], 13, 14);
plane([125, 865], [703, 916], [285, 572], [688, 600], 20, 14);

let seed = 1913;
function rnd() {
  seed = (seed * 16807) % 2147483647;
  return seed / 2147483647;
}
const palette = ["#2a0838", "#174868", "#11918a", "#2dbf73", "#c8204a", "#e8704a", "#f0b060", "#8e5664", "#5c1a48",
  "#d01880", "#78c8e0", "#6a3a60", "#102549", "#a04060", "#b8a080", "#3a2545", "#1a1030"];

const stripes = [
  { a: [100, 652], b: [258, 428], n: 120, min: 6, max: 13, spread: 8 },
  { a: [82, 735], b: [275, 490], n: 120, min: 4, max: 7, spread: 5 },
  { a: [105, 800], b: [280, 525], n: 110, min: 4, max: 8, spread: 8 },
  { a: [125, 860], b: [285, 565], n: 130, min: 7, max: 12.500, spread: 20 }
];
for (const s of stripes) {
  for (let i = 0; i < s.n; i++) {
    const t = rnd();
    el(scatter, "circle", {
      cx: s.a[0] + (s.b[0] - s.a[0]) * t + (rnd() - .5) * s.spread,
      cy: s.a[1] + (s.b[1] - s.a[1]) * t + (rnd() - .5) * s.spread,
      r: s.min + (s.max - s.min) * rnd(),
      fill: palette[Math.floor(rnd() * palette.length)]
    });
  }
}
for (const [cx, cy, r, fill] of [
  [242, 247, 5, "#000"], [247, 285, 5, "#000"], [252, 322, 5, "#000"], [257, 358, 4, "#000"], [261, 392, 4.500, "#000"],
  [255, 402, 6, "#6a3a60"], [35, 433, 7, "#80b040"], [180, 450, 7, "#d0d860"], [222, 445, 5, "#8e5664"],
  [307, 513, 9, "#8a4a60"], [529, 511, 8, "#4a1a50"], [413, 575, 4, "#000"], [547, 586, 4, "#000"],
  [160, 522, 8, "#e89060"], [103, 598, 8, "#f0b060"], [102, 652, 13, "#78c8e0"], [125, 858, 5, "#20e070"]
]) {
  el(scatter, "circle", { cx, cy, r, fill });
}
```
